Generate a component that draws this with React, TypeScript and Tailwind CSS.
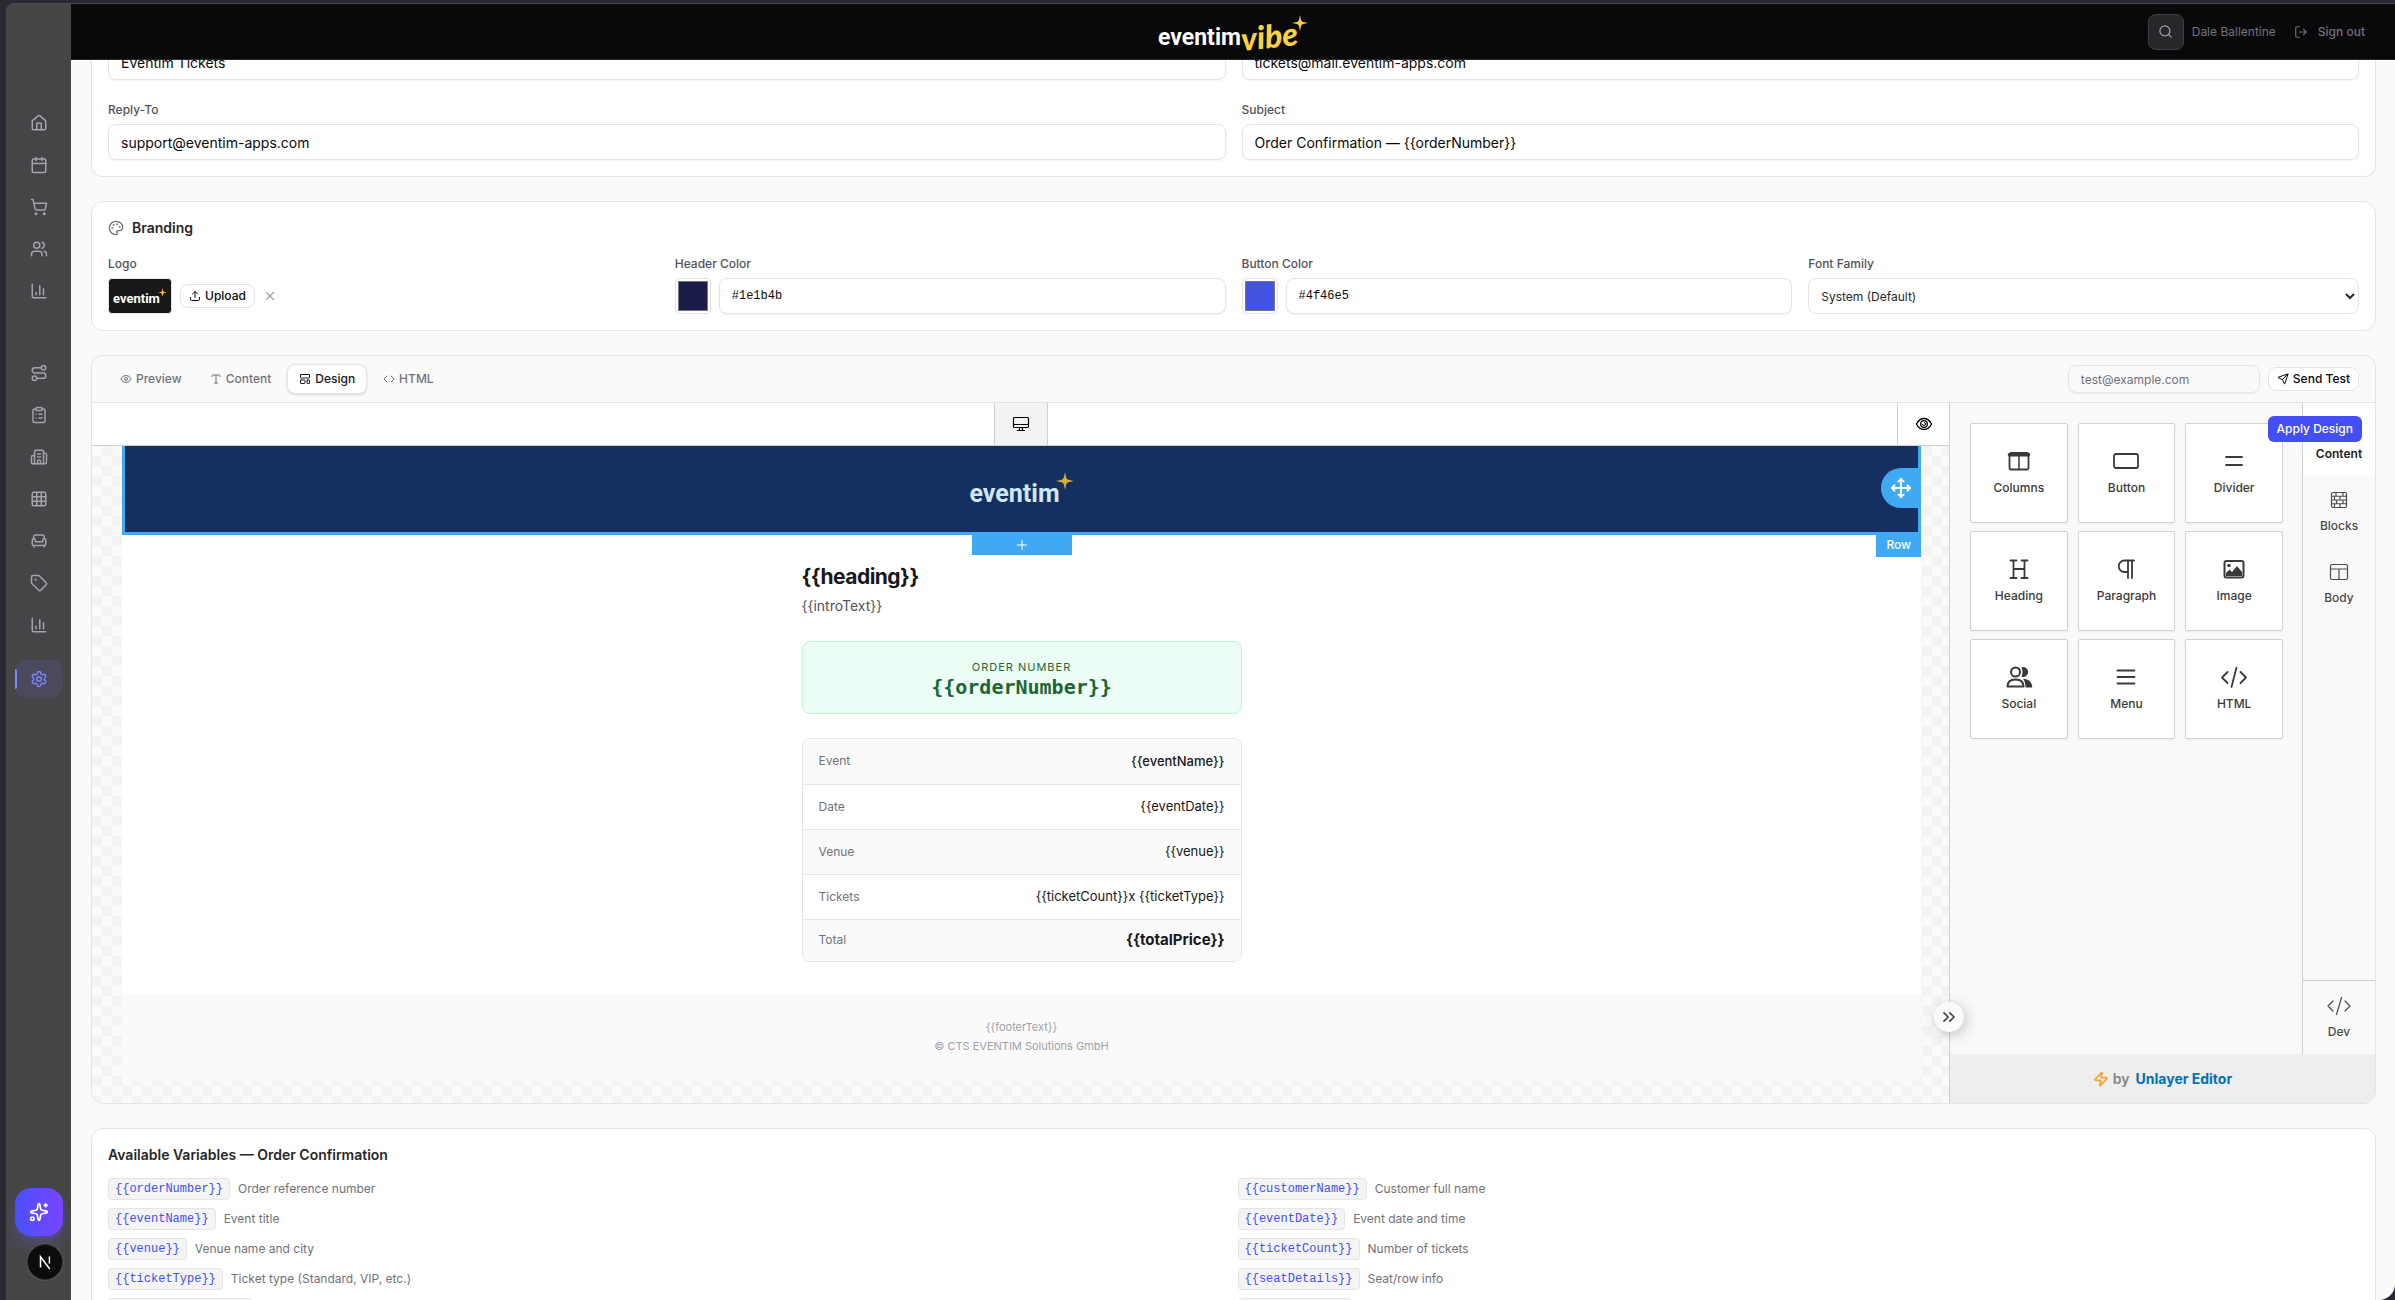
import type { ReactNode } from "react";
import {
  Calendar,
  ChartColumn,
  ChevronsRight,
  ClipboardList,
  Code,
  Eye,
  Grid3x3,
  House,
  LayoutTemplate,
  LogOut,
  Move,
  Palette,
  Plus,
  Search,
  Send,
  Settings,
  ShoppingCart,
  Sparkles,
  Tag,
  Type,
  Upload,
  Users,
  X,
  Zap,
} from "lucide-react";

const CARD = "rounded-xl border border-zinc-200 bg-white";
const FIELD =
  "w-full rounded-lg border border-zinc-200 bg-white px-3 text-zinc-950 shadow-xs outline-none";
const LABEL = "text-xs leading-4 font-medium text-zinc-600";

function Star({ className }: { className: string }) {
  return (
    <svg viewBox="0 0 20 20" className={className} fill="currentColor" aria-hidden="true">
      <path d="M10 0 L11.3 6.2 Q11.8 8.2 13.8 8.7 L20 10 L13.8 11.3 Q11.8 11.8 11.3 13.8 L10 20 L8.7 13.8 Q8.2 11.8 6.2 11.3 L0 10 L6.2 8.7 Q8.2 8.2 8.7 6.2 Z" />
    </svg>
  );
}

function RouteIcon() {
  return (
    <svg width="18" height="18" viewBox="0 0 24 24" fill="none" stroke="currentColor" strokeWidth="2" strokeLinecap="round" strokeLinejoin="round">
      <circle cx="6" cy="19" r="3" />
      <path d="M9 19h8.5a3.5 3.5 0 0 0 0-7h-11a3.5 3.5 0 0 1 0-7H15" />
      <circle cx="18" cy="5" r="3" />
    </svg>
  );
}

function BuildingIcon() {
  return (
    <svg width="18" height="18" viewBox="0 0 24 24" fill="none" stroke="currentColor" strokeWidth="2" strokeLinecap="round" strokeLinejoin="round">
      <path d="M10 12h4M10 8h4M14 21v-3a2 2 0 0 0-4 0v3" />
      <path d="M6 10H4a2 2 0 0 0-2 2v7a2 2 0 0 0 2 2h16a2 2 0 0 0 2-2V9a2 2 0 0 0-2-2h-2" />
      <path d="M6 21V5a2 2 0 0 1 2-2h8a2 2 0 0 1 2 2v16" />
    </svg>
  );
}

function SofaIcon() {
  return (
    <svg width="18" height="18" viewBox="0 0 24 24" fill="none" stroke="currentColor" strokeWidth="2" strokeLinecap="round" strokeLinejoin="round">
      <path d="M19 9V6a2 2 0 0 0-2-2H7a2 2 0 0 0-2 2v3" />
      <path d="M3 16a2 2 0 0 0 2 2h14a2 2 0 0 0 2-2v-5a2 2 0 0 0-4 0v1.5a.5.5 0 0 1-.5.5h-9a.5.5 0 0 1-.5-.5V11a2 2 0 0 0-4 0z" />
      <path d="M5 18v2M19 18v2" />
    </svg>
  );
}

function NavItem({ label, children }: { label: string; children: ReactNode }) {
  return (
    <a href="#" aria-label={label} className="flex h-[38px] items-center justify-center rounded-xl text-[#a3a3ad]">
      {children}
    </a>
  );
}

function Sidebar() {
  return (
    <aside className="flex w-16 shrink-0 flex-col bg-[#454547] px-2 pt-[100px]">
      <nav className="flex flex-col gap-1" aria-label="Main">
        <NavItem label="Home"><House size={18} /></NavItem>
        <NavItem label="Events"><Calendar size={18} /></NavItem>
        <NavItem label="Orders"><ShoppingCart size={18} /></NavItem>
        <NavItem label="Customers"><Users size={18} /></NavItem>
        <NavItem label="Reports"><ChartColumn size={18} /></NavItem>
      </nav>
      <nav className="mt-11 flex flex-col gap-1" aria-label="Manage">
        <NavItem label="Journeys"><RouteIcon /></NavItem>
        <NavItem label="Tasks"><ClipboardList size={18} /></NavItem>
        <NavItem label="Venues"><BuildingIcon /></NavItem>
        <NavItem label="Seat maps"><Grid3x3 size={18} /></NavItem>
        <NavItem label="Seating"><SofaIcon /></NavItem>
        <NavItem label="Prices"><Tag size={18} /></NavItem>
        <NavItem label="Analytics"><ChartColumn size={18} /></NavItem>
      </nav>
      <a href="#" aria-label="Settings" className="relative mt-4 flex h-[38px] items-center justify-center rounded-xl bg-[#4a4a5c] text-[#7c86ff]">
        <span className="absolute left-0 h-5 w-0.5 rounded-r bg-[#7c86ff]" />
        <Settings size={18} />
      </a>
      <div className="mt-auto flex flex-col pb-5">
        <button aria-label="Assistant" className="flex h-12 items-center justify-center rounded-2xl bg-linear-to-r from-[#4650fb] to-[#7843ff] text-white shadow-lg shadow-indigo-500/30">
          <Sparkles size={20} />
        </button>
        <button aria-label="Developer tools" className="mt-2 flex size-9 items-center justify-center self-end rounded-full border border-[#2e2e2e] bg-[#0c0c0c] ring-1 ring-[#555]">
          <svg width="16" height="16" viewBox="0 0 16 16" fill="none" stroke="white" strokeWidth="1.5" aria-hidden="true">
            <path d="M3.5 13.5V2.8L12.8 15M12.4 2.5v7" />
          </svg>
        </button>
      </div>
    </aside>
  );
}

function Header() {
  return (
    <header className="grid h-14 shrink-0 grid-cols-[1fr_auto_1fr] items-center border-b border-[#27272a] bg-[#09090b] px-[30px]">
      <div />
      <div className="relative flex h-full items-center pt-3 pr-2.5 font-['Roboto',sans-serif] text-[23px] leading-8 font-bold text-white">
        <span>eventim</span>
        <span className="-rotate-6 pb-1 font-['Lato',sans-serif] text-[32px] font-black text-[#fbcf42] italic">vibe</span>
        <Star className="absolute top-[11px] right-0 size-4 text-[#fbcf42]" />
      </div>
      <div className="flex items-center justify-end text-xs text-[#71717a]">
        <button aria-label="Search" className="flex size-9 items-center justify-center rounded-lg border border-[#3f3f46] bg-[#27272a] text-[#a1a1aa]">
          <Search size={15} />
        </button>
        <span className="ml-2">Dale Ballentine</span>
        <button className="ml-[18px] flex items-center gap-2.5 font-medium">
          <LogOut size={14} />
          Sign out
        </button>
      </div>
    </header>
  );
}

function SenderCard() {
  return (
    <section className={`${CARD} rounded-t-none border-t-0 px-4 pb-4`}>
      <div className="-mt-4 grid grid-cols-2 gap-x-4">
        <input aria-label="From name" defaultValue="Eventim Tickets" className={`${FIELD} h-9 text-sm`} />
        <input aria-label="From email" defaultValue="tickets@mail.eventim-apps.com" className={`${FIELD} h-9 text-sm`} />
        <div className="mt-[22px] flex flex-col gap-1.5">
          <label htmlFor="reply" className={LABEL}>Reply-To</label>
          <input id="reply" defaultValue="support@eventim-apps.com" className={`${FIELD} h-9 text-sm`} />
        </div>
        <div className="mt-[22px] flex flex-col gap-1.5">
          <label htmlFor="subject" className={LABEL}>Subject</label>
          <input id="subject" defaultValue="Order Confirmation — {{orderNumber}}" className={`${FIELD} h-9 text-sm`} />
        </div>
      </div>
    </section>
  );
}

function ColorField({ id, label, swatch, value }: { id: string; label: string; swatch: string; value: string }) {
  return (
    <div className="flex flex-col gap-1.5">
      <label htmlFor={id} className={LABEL}>{label}</label>
      <div className="flex gap-2">
        <input
          type="color"
          aria-label={`${label} swatch`}
          defaultValue={swatch}
          className="size-9 shrink-0 rounded border border-zinc-200 bg-white p-0.5 [&::-webkit-color-swatch-wrapper]:p-0"
        />
        <input id={id} defaultValue={value} className={`${FIELD} h-9 font-['Liberation_Mono',monospace] text-xs`} />
      </div>
    </div>
  );
}

function BrandingCard() {
  return (
    <section className={`${CARD} px-4 pt-4 pb-4`}>
      <h2 className="flex h-5 items-center gap-2 text-sm font-semibold text-zinc-800">
        <Palette size={16} className="text-zinc-500" />
        Branding
      </h2>
      <div className="mt-[18px] grid grid-cols-4 gap-4">
        <div className="flex flex-col gap-1.5">
          <span className={LABEL}>Logo</span>
          <div className="flex h-9 items-center">
            <div className="relative flex h-9 w-16 items-center rounded border border-zinc-200 bg-[#18181b] px-1 pt-1.5 font-['Roboto',sans-serif] text-[13px] leading-4 font-bold text-white">
              eventim
              <Star className="absolute top-[9px] right-1 size-[9px] text-[#fbb924]" />
            </div>
            <button className="ml-2 flex h-6 items-center gap-1 rounded-lg border border-zinc-200 bg-white px-2 text-xs font-medium text-zinc-950">
              <Upload size={12} />
              Upload
            </button>
            <button aria-label="Remove logo" className="ml-2 text-zinc-400">
              <X size={14} />
            </button>
          </div>
        </div>
        <ColorField id="header-color" label="Header Color" swatch="#1c1c4a" value="#1e1b4b" />
        <ColorField id="button-color" label="Button Color" swatch="#4454e2" value="#4f46e5" />
        <div className="flex flex-col gap-1.5">
          <label htmlFor="font" className={LABEL}>Font Family</label>
          <select id="font" className="h-9 w-full rounded-lg border border-zinc-200 bg-white px-2 text-xs text-zinc-800">
            <option>System (Default)</option>
          </select>
        </div>
      </div>
    </section>
  );
}

function EditorToolbar() {
  const tab = "flex h-[30px] items-center gap-1 rounded-lg border border-transparent px-[11px] text-xs font-medium text-zinc-500";
  return (
    <div className="flex h-[47px] items-center justify-between border-b border-zinc-200 px-4">
      <div className="flex gap-1">
        <button className={tab}><Eye size={12} />Preview</button>
        <button className={tab}><Type size={12} />Content</button>
        <button className="flex h-[30px] items-center gap-1 rounded-lg border border-zinc-200 bg-white px-[11px] text-xs font-medium text-zinc-900 shadow-sm">
          <LayoutTemplate size={12} />Design
        </button>
        <button className={tab}><Code size={12} />HTML</button>
      </div>
      <div className="flex items-center gap-2">
        <input
          aria-label="Test recipient"
          placeholder="test@example.com"
          className="h-7 w-48 rounded-lg border border-zinc-200 px-3 text-xs shadow-xs outline-none placeholder:text-zinc-500"
        />
        <button className="flex h-6 items-center gap-1 rounded-lg border border-zinc-200 bg-white px-2 text-xs font-medium text-zinc-950">
          <Send size={12} />
          Send Test
        </button>
      </div>
    </div>
  );
}

function DetailRow({ label, shaded, children }: { label: string; shaded?: boolean; children: ReactNode }) {
  return (
    <tr className={shaded ? "h-[45px] border-b border-zinc-200 bg-zinc-50 last:h-[42px] last:border-b-0" : "h-[45px] border-b border-zinc-200 bg-white"}>
      <th scope="row" className="pl-4 text-left text-xs font-normal text-zinc-500">{label}</th>
      <td className="pr-4 text-right text-[13px] text-zinc-900">{children}</td>
    </tr>
  );
}

function EmailCanvas() {
  return (
    <div className="min-h-0 flex-1 bg-[#fafafa] bg-[conic-gradient(#f3f3f3_25%,transparent_0_50%,#f3f3f3_0_75%,transparent_0)] bg-[length:20px_20px] pr-7 pl-[30px]">
      <div className="relative flex h-[89px] items-center justify-center border-3 border-t-0 border-[#40a9f3] bg-[#153060]">
        <div className="relative pt-2.5 pr-[14px] font-['Roboto',sans-serif] text-[25px] leading-8 font-bold text-[#cfe6f5]">
          eventim
          <Star className="absolute top-1 right-0 size-[18px] text-[#d2b03e]" />
        </div>
        <button aria-label="Move row" className="absolute top-[22px] -right-[3px] flex size-10 items-center justify-center rounded-l-full bg-[#40a9f3] text-white">
          <Move size={22} />
        </button>
        <button aria-label="Add row" className="absolute top-full left-1/2 mt-[3px] flex h-5 w-[100px] -translate-x-1/2 items-center justify-center bg-[#40a9f3] text-white">
          <Plus size={16} strokeWidth={1.5} />
        </button>
        <span className="absolute top-full -right-[3px] flex h-[25px] items-center bg-[#40a9f3] px-2.5 text-xs font-medium text-white">Row</span>
      </div>
      <div className="flex flex-col items-center bg-white pt-[26px] pb-8">
        <div className="w-[440px]">
          <h1 className="text-[21px] leading-8 font-bold tracking-tight text-zinc-900">{"{{heading}}"}</h1>
          <p className="text-sm leading-[26px] text-zinc-600">{"{{introText}}"}</p>
          <div className="mt-[22px] flex h-[73px] flex-col items-center justify-center rounded-lg border border-[#bbf7d0] bg-[#ecfdf5] pt-0.5 text-[#1d6633]">
            <span className="text-[11px] leading-4 tracking-[1px]">ORDER NUMBER</span>
            <span className="font-['DejaVu_Sans_Mono',monospace] text-xl leading-6 font-bold">{"{{orderNumber}}"}</span>
          </div>
          <div className="mt-6 overflow-hidden rounded-lg border border-zinc-200">
            <table className="w-full border-collapse">
              <tbody>
                <DetailRow label="Event" shaded><span className="font-medium">{"{{eventName}}"}</span></DetailRow>
                <DetailRow label="Date">{"{{eventDate}}"}</DetailRow>
                <DetailRow label="Venue" shaded>{"{{venue}}"}</DetailRow>
                <DetailRow label="Tickets">{"{{ticketCount}}x {{ticketType}}"}</DetailRow>
                <DetailRow label="Total" shaded><span className="text-[15px] font-bold">{"{{totalPrice}}"}</span></DetailRow>
              </tbody>
            </table>
          </div>
        </div>
      </div>
      <div className="h-[87px] bg-[#fafafa] pt-6 text-center text-[11px] leading-[19px] text-[#a1a1aa]">
        <p>{"{{footerText}}"}</p>
        <p>© CTS EVENTIM Solutions GmbH</p>
      </div>
    </div>
  );
}

function ToolIcon({ children }: { children: ReactNode }) {
  return (
    <svg width="28" height="24" viewBox="0 0 28 24" fill="none" stroke="currentColor" strokeWidth="2" strokeLinecap="round" strokeLinejoin="round" aria-hidden="true">
      {children}
    </svg>
  );
}

const TOOLS: { label: string; icon: ReactNode }[] = [
  {
    label: "Columns",
    icon: (
      <>
        <rect x="4.5" y="4" width="19" height="16.5" rx="1.5" strokeWidth="1.8" />
        <path d="M4.5 5.8h19" strokeWidth="3.600" />
        <path d="M14 7v13" strokeWidth="1.5" />
      </>
    ),
  },
  { label: "Button", icon: <rect x="2" y="5" width="24" height="14" rx="2" strokeWidth="1.8" /> },
  { label: "Divider", icon: <path d="M6 8h16M6 16h16" strokeWidth="1.8" /> },
  {
    label: "Heading",
    icon: <path d="M5.5 3.5h6M16.5 3.5h6M5.5 21h6M16.5 21h6M8.5 3.5V21M19.5 3.5V21M8.5 12h11" strokeWidth="1.8" />,
  },
  {
    label: "Paragraph",
    icon: <path d="M22 3.5H12.5a5.5 5.5 0 0 0 0 11.500H16M16 3.5V21M20 3.5V21" strokeWidth="1.8" />,
  },
  {
    label: "Image",
    icon: (
      <>
        <rect x="4.5" y="4" width="19" height="16.5" rx="2" />
        <circle cx="9" cy="8.5" r="1.8" fill="currentColor" stroke="none" />
        <path d="M6 19v-3l3.500-3.500 2.500 2.500 5-6 5 6v4z" fill="currentColor" stroke="none" />
      </>
    ),
  },
  {
    label: "Social",
    icon: (
      <>
        <circle cx="10.5" cy="7" r="4.5" />
        <path d="M2.5 21.5c0-4.500 3-7 8-7s8 2.500 8 7z" />
        <path d="M16.5 2.3a5 5 0 1 1 0 9.400c1.300-3 1.300-6.400 0-9.400z" fill="currentColor" stroke="none" />
        <path d="M18 13.8c6 0 9.200 3.500 9.200 8.700h-6.700c0-4-.8-6.500-2.500-8.700z" fill="currentColor" stroke="none" />
      </>
    ),
  },
  { label: "Menu", icon: <path d="M5.5 5.5h17M5.5 12h17M5.5 18.5h17" strokeWidth="1.8" /> },
  { label: "HTML", icon: <path d="M7.5 7l-5.500 5.500L7.500 18M20.500 7l5.500 5.500L20.500 18M16.500 2.500L11.500 22" strokeWidth="1.8" /> },
];

function SideTab({ label, children }: { label: string; children: ReactNode }) {
  return (
    <button className="flex h-[72px] w-full flex-col items-center gap-2 pt-[15px] text-xs font-medium text-[#4b4b4b]">
      {children}
      {label}
    </button>
  );
}

function ToolPanel() {
  return (
    <div className="relative flex w-[426px] shrink-0 flex-col border-l border-[#cfcfcf] bg-[#f9f9f9]">
      <div className="flex min-h-0 flex-1">
        <div className="grid flex-1 grid-cols-3 content-start gap-x-2.5 gap-y-2 p-5 pr-[19px]">
          {TOOLS.map((tool) => (
            <button
              key={tool.label}
              className="flex h-[100px] flex-col items-center gap-1 rounded-xs border border-[#d2d2d2] bg-white pt-[25px] text-xs leading-[22px] font-medium text-[#3a3a3a] shadow-xs"
            >
              <ToolIcon>{tool.icon}</ToolIcon>
              {tool.label}
            </button>
          ))}
        </div>
        <div className="flex w-[73px] flex-col border-l border-[#cfcfcf]">
          <button className="flex h-[72px] items-end justify-center bg-white pb-[13px] text-xs font-semibold text-[#222]">Content</button>
          <SideTab label="Blocks">
            <svg width="20" height="20" viewBox="0 0 20 20" fill="none" stroke="currentColor" strokeWidth="1.2">
              <rect x="2.5" y="2.5" width="15" height="15" rx="1.5" />
              <path d="M2.5 6.25h15M2.5 10h15M2.5 13.75h15M7 2.5v3.750M14 2.5v3.750M5.5 6.25V10M11 6.25V10M7.5 10v3.750M14 10v3.750M5.5 13.75v3.750M11 13.75v3.750" />
            </svg>
          </SideTab>
          <SideTab label="Body">
            <svg width="20" height="20" viewBox="0 0 20 20" fill="none" stroke="currentColor" strokeWidth="1.2">
              <rect x="1.5" y="2.5" width="17" height="15" rx="1.5" />
              <path d="M1.5 7h17M10 7v10.500" />
            </svg>
          </SideTab>
          <div className="mt-auto h-[74px] border-t border-[#cfcfcf]">
            <SideTab label="Dev">
              <svg width="24" height="20" viewBox="0 0 24 20" fill="none" stroke="currentColor" strokeWidth="1.2" strokeLinecap="round" strokeLinejoin="round">
                <path d="M6 5l-5 5 5 5M18 5l5 5-5 5M14.500 1.500l-5 17" />
              </svg>
            </SideTab>
          </div>
        </div>
      </div>
      <div className="flex h-[49px] items-center justify-center gap-1.5 bg-[#eeeeee] text-sm font-semibold text-[#858585]">
        <Zap size={16} strokeWidth={2.5} className="-mr-0.5 text-[#f5a230]" />
        by
        <a href="#" className="font-bold text-[#0071bc]">Unlayer Editor</a>
      </div>
      <button className="absolute top-[13px] right-[13px] flex h-[26px] items-center rounded-md bg-[#434ef6] px-[9px] text-xs font-medium text-white">
        Apply Design
      </button>
      <button aria-label="Collapse panel" className="absolute bottom-[71px] -left-4 flex size-[30px] items-center justify-center rounded-full bg-[#fafafa] text-[#444] shadow-[2px_3px_14px_rgba(0,0,0,0.22)]">
        <ChevronsRight size={20} />
      </button>
    </div>
  );
}

function Editor() {
  return (
    <section className="overflow-hidden rounded-xl border border-zinc-200 bg-[#fafafa]">
      <EditorToolbar />
      <div className="flex h-[700px]">
        <div className="flex min-w-0 flex-1 flex-col">
          <div className="relative flex h-[43px] shrink-0 justify-center border-b border-[#cfcfcf] bg-white">
            <button aria-label="Desktop view" className="flex w-[54px] items-center justify-center border-x border-[#cfcfcf] bg-[#f3f3f3] text-black">
              <svg width="18" height="16" viewBox="0 0 18 16" fill="none" stroke="currentColor" strokeWidth="1.2" aria-hidden="true">
                <rect x="1.5" y="1.5" width="15" height="10" rx="1" />
                <path d="M1.5 8.5h15M7.5 11.500v3M10.500 11.500v3M5 14.500h8" />
              </svg>
            </button>
            <button aria-label="Preview" className="absolute inset-y-0 right-0 flex w-[52px] items-center justify-center border-l border-[#cfcfcf] text-black">
              <svg width="18" height="16" viewBox="0 0 18 16" fill="none" stroke="currentColor" strokeWidth="1.3" aria-hidden="true">
                <path d="M1.5 8C3.200 4.500 5.800 2.500 9 2.500S14.800 4.500 16.500 8C14.800 11.500 12.200 13.500 9 13.500S3.200 11.500 1.500 8z" />
                <circle cx="9" cy="8" r="3.300" />
                <path d="M9 6.500A1.500 1.500 0 1 1 7.500 8" strokeWidth="1" />
              </svg>
            </button>
          </div>
          <EmailCanvas />
        </div>
        <ToolPanel />
      </div>
    </section>
  );
}

const VARIABLES: [string, string][] = [
  ["{{orderNumber}}", "Order reference number"],
  ["{{customerName}}", "Customer full name"],
  ["{{eventName}}", "Event title"],
  ["{{eventDate}}", "Event date and time"],
  ["{{venue}}", "Venue name and city"],
  ["{{ticketCount}}", "Number of tickets"],
  ["{{ticketType}}", "Ticket type (Standard, VIP, etc.)"],
  ["{{seatDetails}}", "Seat/row info"],
  ["{{organizerEmail}}", ""],
  ["{{totalPrice}}", ""],
];

function Variables() {
  return (
    <section className={`${CARD} px-4 pt-4 pb-4`}>
      <h2 className="text-sm leading-5 font-semibold text-zinc-800">Available Variables — Order Confirmation</h2>
      <div className="mt-[13px] grid grid-cols-2 gap-2">
        {VARIABLES.map(([name, text]) => (
          <div key={name} className="flex h-[22px] items-center gap-2 text-xs text-zinc-500">
            <code className="rounded border border-zinc-200 bg-zinc-100 px-1.5 font-['Liberation_Mono',monospace] text-xs leading-5 text-[#434ef6]">{name}</code>
            {text}
          </div>
        ))}
      </div>
    </section>
  );
}

export default function App() {
  return (
    <div className="h-screen overflow-hidden bg-[#2a2833] pt-[3px] pl-1.5 font-['Inter',sans-serif]">
      <div className="flex h-full overflow-hidden rounded-tl-lg rounded-br-2xl border-t border-l border-[#48484c] bg-[#454547]">
        <Sidebar />
        <div className="flex min-w-0 flex-1 flex-col">
          <Header />
          <main className="flex min-h-0 flex-1 flex-col gap-6 overflow-hidden bg-[#fafafa] pr-[19px] pl-5 *:shrink-0">
            <SenderCard />
            <BrandingCard />
            <Editor />
            <Variables />
          </main>
        </div>
      </div>
    </div>
  );
}
